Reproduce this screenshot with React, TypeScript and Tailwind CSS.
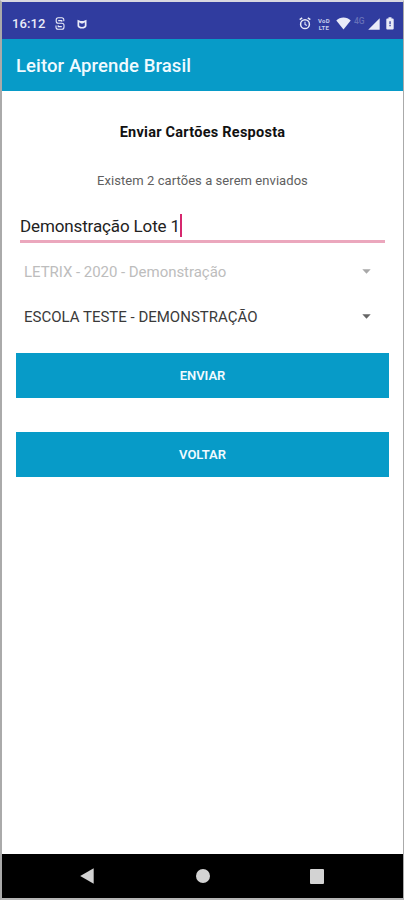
import { useState } from "react";

const ACTIONS = ["ENVIAR", "VOLTAR"];

const LOTS = [
  { label: "LETRIX - 2020 - Demonstração", disabled: true },
  { label: "ESCOLA TESTE - DEMONSTRAÇÃO", disabled: false },
];

function StatusBar() {
  return (
    <div className="flex h-[37px] shrink-0 items-center bg-[#303c9f] pl-[10px] pt-[6px] pr-[9px] text-[#e9ebf8]">
      <span className="w-[35px] whitespace-nowrap text-[13px] font-medium leading-4 tracking-[0.1px]">16:12</span>

      {/* Notifications */}
      <svg className="ml-[8px]" width="10" height="13" viewBox="0 0 10 13" fill="none" stroke="currentColor" strokeWidth="1.1">
        <path d="M8.800 4.200V2.800C8.800 1.500 8 .7 6.800.7H3.200C2 .7 1.200 1.500 1.200 2.800v1.400C1.200 5.400 2 6.200 3.200 6.200h3.600c1.400 0 2.200.8 2.200 2v1.800c0 1.400-.8 2.300-2.200 2.300H3.200C1.800 12.300 1 11.400 1 10V8.600" />
        <path d="M3.200 3.600h3.600v1.200M3.200 8.200v1.400h3.600" />
      </svg>
      <svg className="ml-[12px]" width="10" height="10" viewBox="0 0 10 10" fill="currentColor" fillRule="evenodd">
        <path d="M.5.8 3.500 1.900h3L9.500.8v5.900C9.500 8.600 7.500 9.500 5 9.500S.5 8.600.5 6.700zM2.200 3.300v3C2.200 7.400 3.400 7.900 5 7.900s2.800-.5 2.800-1.600v-3L5.900 4.500H4.100z" />
      </svg>

      {/* System icons */}
      <div className="ml-auto flex items-center">
        <svg width="12" height="13" viewBox="0 0 12 13" fill="none" stroke="currentColor" strokeWidth="1.500">
          <circle cx="6" cy="7.200" r="4.400" />
          <path d="M.7 2.700 3.200.8M11.300 2.700 8.800.8" />
          <path d="M6 4.700v2.700l1.800 1.100" strokeWidth="1.100" />
        </svg>
        <span className="ml-[6px] flex w-[14px] flex-col items-center whitespace-nowrap text-[6px] font-bold leading-[7px] tracking-[0.3px] text-[#c9cdec]">
          <span>VoD</span>
          <span>LTE</span>
        </span>
        <svg className="ml-[5px]" width="15" height="13" viewBox="0 0 15 13" fill="currentColor">
          <path d="M7.500 12.500.3 3.600C2.200 1.700 4.700.6 7.500.6s5.300 1.100 7.200 3z" />
        </svg>
        <span className="mb-[5px] ml-[3px] w-[12px] whitespace-nowrap text-[8.500px] font-medium leading-[9px] text-[#6670b8]">4G</span>
        <svg className="ml-[2px]" width="12" height="12" viewBox="0 0 12 12" fill="currentColor">
          <path d="M11.700.2v11.600H.2z" />
        </svg>
        <svg className="ml-[6px]" width="8" height="13" viewBox="0 0 8 13" fill="currentColor">
          <path d="M2.500.3h3v1.200h1.300c.5 0 .9.400.9.900v9.200c0 .5-.4.900-.9.900H1.200a.9.900 0 0 1-.9-.9V2.400c0-.5.400-.9.900-.9h1.300z" />
          <path d="M3.400 4.200h1.300v3H3.400zM3.400 8h1.300v1.200H3.400z" fill="#303c9f" />
        </svg>
      </div>
    </div>
  );
}

function Spinner({ label, disabled }: { label: string; disabled: boolean }) {
  return (
    <button
      disabled={disabled}
      className={`flex h-[45px] w-full items-center justify-between pl-2 pr-[18px] text-left text-[15px] ${
        disabled ? "text-[#bdbdbd]" : "text-[#3a3a3a]"
      }`}
    >
      <span className={disabled ? "whitespace-nowrap tracking-[-0.040px]" : "whitespace-nowrap"}>{label}</span>
      <svg
        className={disabled ? "mb-[2px] text-[#a8a8a8]" : "mb-[2px] text-[#666666]"}
        width="9"
        height="5"
        viewBox="0 0 9 5"
        fill="currentColor"
      >
        <path d="M.3.3h8.400L4.500 4.700z" />
      </svg>
    </button>
  );
}

function NavigationBar() {
  return (
    <div className="flex h-[44px] shrink-0 items-center bg-black pl-[78px] text-[#d3d3d3]">
      <svg width="14" height="16" viewBox="0 0 14 16" fill="currentColor">
        <path d="M13.700.3v15.400L.2 8z" />
      </svg>
      <span className="ml-[101.500px] size-[14px] rounded-full bg-current" />
      <span className="ml-[100.500px] h-[15px] w-[14px] rounded-[1px] bg-current" />
    </div>
  );
}

export default function App() {
  const [name, setName] = useState("Demonstração Lote 1");

  return (
    <div className="flex h-[900px] w-[404px] flex-col border-t-2 border-b-2 border-l-2 border-r border-t-[#d8d8e0] border-r-[#aaaaaa] border-b-[#b5b5b5] border-l-[#aaaaaa] bg-white font-['Roboto',sans-serif]">
      <StatusBar />

      <header className="flex h-[52px] shrink-0 items-center bg-[#079bc8] pl-[14px] pt-[3px]">
        <h1 className="whitespace-nowrap text-[18.500px] font-medium tracking-[0.1px] text-[#f0faff]">
          Leitor Aprende Brasil
        </h1>
      </header>

      <main className="flex flex-1 flex-col pl-[14px] pr-[14px]">
        <h2 className="mt-[32px] text-center text-[14.500px] font-bold leading-5 tracking-[0.25px] text-[#111111]">
          Enviar Cartões Resposta
        </h2>
        <p className="mt-[28px] text-center text-[13px] leading-5 tracking-[0.060px] text-[#606060]">
          Existem 2 cartões a serem enviados
        </p>

        {/* Lot name, with the caret at the end of the text */}
        <label className="mx-1 mt-[23px] flex h-[29px] items-start border-b-[3px] border-[#eba7bd]">
          <input
            className="w-[160px] bg-transparent p-0 text-[17px] leading-6 tracking-[-0.130px] text-[#222222] outline-none"
            value={name}
            onChange={(e) => setName(e.target.value)}
          />
          <span className="h-[23px] w-[2px] bg-[#d6286e]" />
        </label>

        <div className="mt-[7px]">
          {LOTS.map((lot) => (
            <Spinner key={lot.label} label={lot.label} disabled={lot.disabled} />
          ))}
        </div>

        <div className="mt-[13px] flex flex-col gap-[34px]">
          {ACTIONS.map((action) => (
            <button
              key={action}
              className="h-[45px] bg-[#079bc8] pt-px text-[13px] font-semibold tracking-[-0.050px] text-[#f0faff]"
            >
              {action}
            </button>
          ))}
        </div>
      </main>

      <NavigationBar />
    </div>
  );
}
